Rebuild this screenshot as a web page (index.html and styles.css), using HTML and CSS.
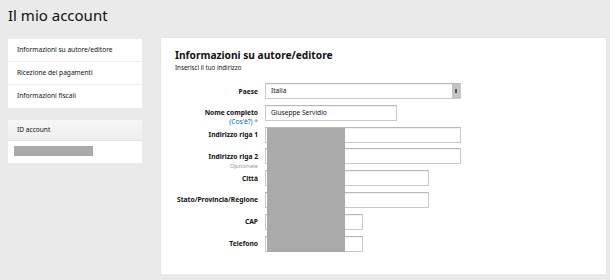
FILE: index.html
```html
<!DOCTYPE html>
<html lang="it">
<head>
  <meta charset="UTF-8" />
  <title>Il mio account</title>
  <link rel="stylesheet" href="styles.css">
</head>
<body>

  <h1 class="page-title">Il mio account</h1>

  <div class="layout">
    <aside class="sidebar">
      <ul class="nav-card">
        <li>Informazioni su autore/editore</li>
        <li>Ricezione dei pagamenti</li>
        <li>Informazioni fiscali</li>
      </ul>

      <div class="id-card">
        <div class="id-head">ID account</div>
        <div class="id-body"><span class="mask mask-id"></span></div>
      </div>
    </aside>

    <main class="panel">
      <h2>Informazioni su autore/editore</h2>
      <p class="subtitle">Inserisci il tuo indirizzo</p>

      <div class="form">
        <div class="row">
          <label>Paese</label>
          <div class="select w-lg"><span>Italia</span><i class="arrow"></i></div>
        </div>
        <div class="row">
          <label>Nome completo<br><a href="#">(Cos'è?)</a> <em>*</em></label>
          <div class="input w-md">Giuseppe Servidio</div>
        </div>
        <div class="row">
          <label>Indirizzo riga 1</label>
          <div class="input w-lg"></div>
        </div>
        <div class="row">
          <label>Indirizzo riga 2<br><small>Opzionale</small></label>
          <div class="input w-lg"></div>
        </div>
        <div class="row">
          <label>Città</label>
          <div class="input w-city"></div>
        </div>
        <div class="row">
          <label>Stato/Provincia/Regione</label>
          <div class="input w-city"></div>
        </div>
        <div class="row">
          <label>CAP</label>
          <div class="input w-sm"></div>
        </div>
        <div class="row">
          <label>Telefono</label>
          <div class="input w-sm"></div>
        </div>

        <span class="mask mask-address"></span>
      </div>
    </main>
  </div>

</body>
</html>
```

FILE: styles.css
```css
* {
  margin: 0;
  padding: 0;
  box-sizing: border-box;
}

body {
  background-color: #eaeaea;
  font-family: 'Noto Sans', 'Open Sans', sans-serif;
  color: #111;
  padding: 0 4px 0 8px;
}

.page-title {
  font-size: 15px;
  font-weight: normal;
  line-height: 20px;
  padding-top: 5px;
  height: 38px;
}

.layout {
  display: flex;
  gap: 19px;
  align-items: flex-start;
}

.sidebar {
  width: 134px;
  flex-shrink: 0;
  padding-top: 1px;
}

.nav-card {
  list-style: none;
  background: white;
  font-size: 6.6px;
}

.nav-card li {
  height: 23px;
  line-height: 22px;
  padding-left: 9px;
  border-bottom: 1px solid #eee;
}

.nav-card li:last-child {
  border-bottom: none;
}

.id-card {
  margin-top: 12px;
  background: white;
  font-size: 6.6px;
}

.id-head {
  height: 21px;
  line-height: 20px;
  padding-left: 9px;
  background: linear-gradient(#f7f7f7, #efefef);
  border-bottom: 1px solid #e4e4e4;
}

.id-body {
  height: 22px;
  padding: 5px 6px;
}

.mask {
  display: block;
  background-color: #aaaaaa;
}

.mask-id {
  width: 79px;
  height: 10px;
}

.panel {
  flex: 1;
  background: white;
  height: 236px;
  padding: 9px 14px 0;
  box-shadow: 0 0 1px rgba(0,0,0,0.15);
}

.panel h2 {
  font-size: 10.2px;
  font-weight: bold;
  line-height: 16px;
}

.subtitle {
  font-size: 6.2px;
  line-height: 10px;
  margin-bottom: 10px;
}

.form {
  position: relative;
}

.row {
  display: flex;
  gap: 7px;
  height: 16px;
  margin-bottom: 5.8px;
}

.row label {
  width: 83px;
  flex-shrink: 0;
  text-align: right;
  font-size: 6.7px;
  font-weight: bold;
  line-height: 9px;
  padding-top: 3.5px;
  white-space: nowrap;
}

.row label a {
  color: #0066c0;
  font-weight: normal;
  text-decoration: none;
}

.row label em {
  font-style: normal;
  font-weight: normal;
  color: #888;
}

.row label small {
  font-size: 6px;
  font-weight: normal;
  color: #999;
}

.input,
.select {
  height: 16px;
  border: 1px solid #c9c9c9;
  border-top-color: #b8b8b8;
  box-shadow: inset 0 1px 1px rgba(0,0,0,0.06);
  font-size: 6.6px;
  line-height: 14px;
  padding-left: 5px;
  color: #111;
}

.select {
  display: flex;
  justify-content: space-between;
  padding-right: 0;
}

.select .arrow {
  width: 8px;
  background-color: #c4c4c4;
  position: relative;
}

.select .arrow::after {
  content: "";
  position: absolute;
  left: 3px;
  top: 5px;
  width: 2px;
  height: 4px;
  background-color: #555;
}

.w-lg { width: 196px; }
.w-md { width: 132px; }
.w-city { width: 164px; }
.w-sm { width: 98px; }

.mask-address {
  position: absolute;
  left: 92px;
  top: 45px;
  width: 78px;
  height: 124px;
}
```
